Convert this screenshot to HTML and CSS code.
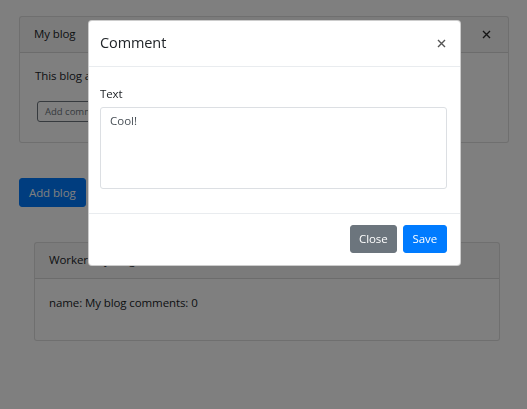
FILE: index.html
```html
<!DOCTYPE html>
<html lang="en">
<head>
<meta charset="utf-8">
<title>Blogs</title>
<link rel="stylesheet" href="styles.css">
</head>
<body>
<div class="page">
  <div class="card">
    <div class="card-header">
      <span>My blog</span>
      <svg class="x-icon dark" width="9" height="9" viewBox="0 0 9 9"><path d="M1 1L8 8M8 1L1 8"/></svg>
    </div>
    <div class="card-body">
      <p class="text">This blog about nothing</p>
      <button class="btn-outline">Add comment</button>
    </div>
  </div>

  <button class="btn btn-primary add-blog">Add blog</button>

  <div class="card card-2">
    <div class="card-header"><span>Worker: My blog</span></div>
    <div class="card-body body-2">
      <p class="text">name: My blog comments: 0</p>
    </div>
  </div>
</div>

<div class="backdrop"></div>

<div class="modal">
  <div class="modal-header">
    <h5 class="modal-title">Comment</h5>
    <svg class="x-icon" width="9" height="9" viewBox="0 0 9 9"><path d="M1 1L8 8M8 1L1 8"/></svg>
  </div>
  <div class="modal-body">
    <label class="label">Text</label>
    <textarea class="textarea">Cool!</textarea>
  </div>
  <div class="modal-footer">
    <button class="btn btn-secondary">Close</button>
    <button class="btn btn-primary">Save</button>
  </div>
</div>
</body>
</html>
```

FILE: styles.css
```css
* { box-sizing: border-box; }
html, body { margin: 0; height: 100%; }
body {
  font-family: "Open Sans", "Noto Sans", sans-serif;
  font-size: 11.5px;
  letter-spacing: -0.1px;
  line-height: 18px;
  color: #212529;
  background: #fff;
}
.page {
  padding: 16px 18px 20px 19px;
}
.card {
  border: 1px solid rgba(0,0,0,.125);
  border-radius: 3px;
  background: #fff;
}
.card-header {
  display: flex;
  justify-content: space-between;
  align-items: center;
  padding: 8px 14px 9px;
  background: rgba(0,0,0,.03);
  border-bottom: 1px solid rgba(0,0,0,.125);
}
.card-header .x-icon { margin-right: 3px; }
.card-body {
  padding: 14px 15px 20px;
}
.text { margin: 0 0 16px; }
.btn-outline {
  margin-left: 2px;
  height: 21px;
  padding: 0 7px;
  font-family: inherit;
  font-size: 9.5px;
  color: #6c757d;
  background: transparent;
  border: 1px solid #6c757d;
  border-radius: 3px;
}
.btn {
  height: 28px;
  padding: 0 9px;
  font-family: inherit;
  font-size: 11.5px;
  letter-spacing: -0.1px;
  line-height: 26px;
  color: #fff;
  border: 1px solid transparent;
  border-radius: 3px;
}
.btn-primary { background: #007bff; border-color: #007bff; }
.btn-secondary { background: #6c757d; border-color: #6c757d; }
.btn-secondary { padding: 0 8px; }
.add-blog {
  display: block;
  margin-top: 35px;
  height: 29px;
}
.card-2 {
  margin: 35px 9px 0 15px;
}
.body-2 { padding: 15px 14px 16px; }
.body-2 .text { margin-bottom: 12px; }

.x-icon { display: block; }
.x-icon path { stroke: #555; stroke-width: 1.4; fill: none; }
.x-icon.dark path { stroke: #2a2a2a; }

.backdrop {
  position: fixed;
  inset: 0;
  background: rgba(0,0,0,.5);
}
.modal {
  position: absolute;
  left: 88px;
  top: 20px;
  width: 373px;
  background: #fff;
  border: 1px solid rgba(0,0,0,.2);
  border-radius: 4px;
}
.modal-header {
  display: flex;
  justify-content: space-between;
  align-items: center;
  padding: 13px 14px 14px 11px;
  border-bottom: 1px solid #e9ecef;
}
.modal-title {
  margin: 0;
  font-size: 14.5px;
  font-weight: 500;
  line-height: 18px;
}
.modal-body {
  padding: 18px 12px 24px 11px;
}
.label {
  display: block;
  margin-bottom: 4px;
}
.textarea {
  display: block;
  width: 347px;
  height: 82px;
  margin: 0;
  padding: 4px 9px;
  font-family: inherit;
  font-size: 11.5px;
  line-height: 18px;
  color: #495057;
  border: 1px solid #dcdfe3;
  border-radius: 3px;
  resize: none;
}
.modal-footer {
  display: flex;
  justify-content: flex-end;
  gap: 6px;
  padding: 11px 13px 12px;
  border-top: 1px solid #e9ecef;
}
```
